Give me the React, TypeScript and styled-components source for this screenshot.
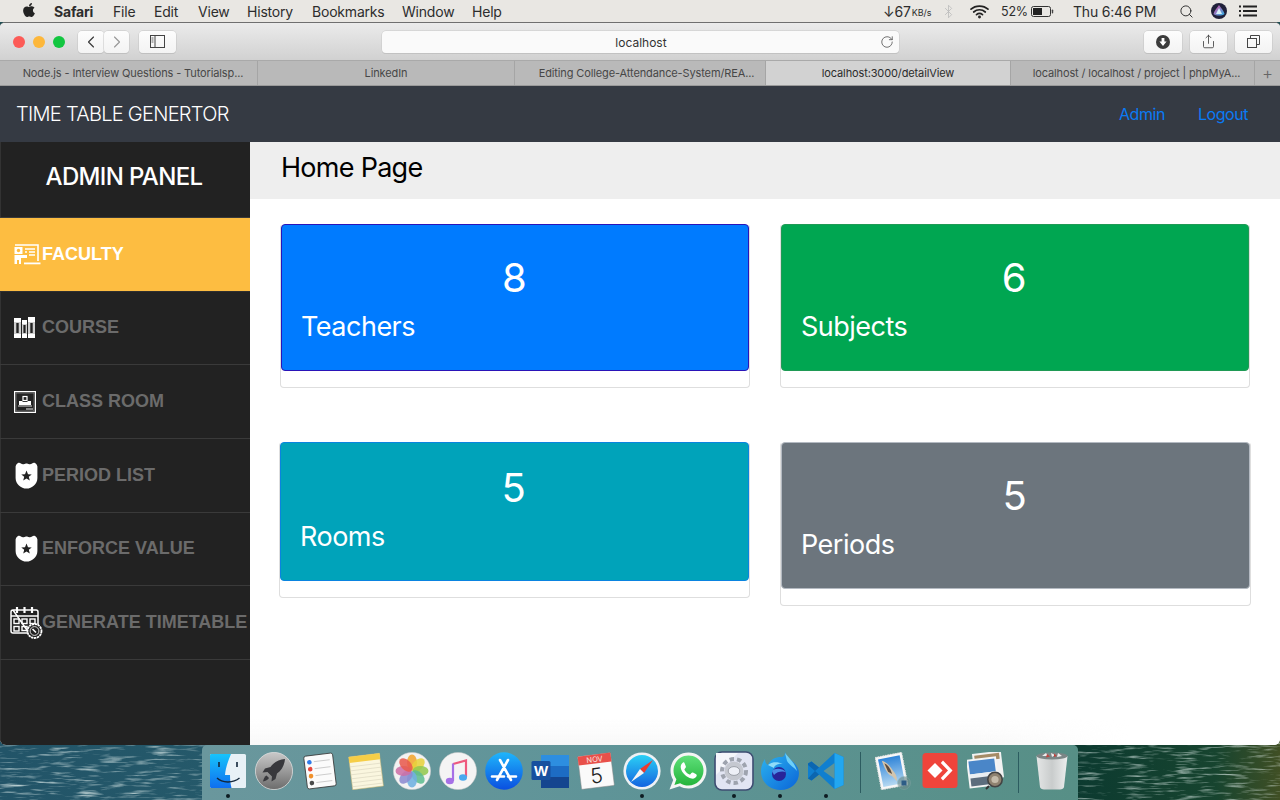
import React from "react";
import styled, { createGlobalStyle } from "styled-components";
import { FaApple } from "react-icons/fa";
import { ChevronLeft, ChevronRight, RotateCw, Search, Share, Bluetooth } from "lucide-react";

const Global = createGlobalStyle`
  html, body { margin: 0; padding: 0; background: #123; }
  * { box-sizing: border-box; }
`;

const Screen = styled.div`
  position: relative;
  width: 1280px;
  height: 800px;
  overflow: hidden;
  display: flex;
  flex-direction: column;
  font-family: Inter, "Liberation Sans", sans-serif;
  background: #1f4f55;
`;

const Wallpaper = styled.svg`
  position: absolute;
  left: 0;
  bottom: 0;
`;

const MenuBar = styled.header`
  height: 22px;
  flex: none;
  display: flex;
  justify-content: space-between;
  align-items: center;
  padding: 0 23px 0 21px;
  background: #e9e7e3;
  font-size: 14px;
  color: #2d2d2d;
  letter-spacing: -0.2px;
  position: relative;
`;

const MenuLeft = styled.nav`
  display: flex;
  align-items: center;
`;

const MenuItem = styled.span<{ $w: number; $bold?: boolean }>`
  width: ${(p) => p.$w}px;
  font-weight: ${(p) => (p.$bold ? 700 : 400)};
  white-space: nowrap;
`;

const AppleMark = styled(FaApple)`
  display: block;
  margin-top: -2px;
  color: #222;
`;

const MenuRight = styled.div`
  display: flex;
  align-items: center;
`;

const Status = styled.span<{ $w: number; $fs?: number }>`
  width: ${(p) => p.$w}px;
  display: flex;
  align-items: center;
  white-space: nowrap;
  font-size: ${(p) => p.$fs ?? 14}px;
`;

const Small = styled.small`
  font-size: 9px;
  letter-spacing: 0;
  margin-left: 1px;
  margin-top: 2px;
`;

const Window = styled.main`
  position: relative;
  height: 723px;
  flex: none;
  display: flex;
  flex-direction: column;
  overflow: hidden;
  border-radius: 5px 5px 6px 6px;
  background: #fff;
  border-top: 1px solid #6f6f6f;
`;

const Toolbar = styled.div`
  height: 37px;
  flex: none;
  display: grid;
  grid-template-columns: 382px 517px 1fr;
  align-items: center;
  background: linear-gradient(#ebebeb, #d1d1d1);
`;

const ToolLeft = styled.div`
  display: flex;
  align-items: center;
  padding-left: 13px;
`;

const Light = styled.i<{ $c: string }>`
  width: 12px;
  height: 12px;
  border-radius: 50%;
  margin-right: 8px;
  background: ${(p) => p.$c};
  display: block;
`;

const ToolButton = styled.button<{ $w: number; $l?: number; $r?: number }>`
  width: ${(p) => p.$w}px;
  height: 22px;
  margin-left: ${(p) => p.$l ?? 0}px;
  margin-right: ${(p) => p.$r ?? 0}px;
  padding: 0;
  display: flex;
  align-items: center;
  justify-content: center;
  background: linear-gradient(#fdfdfd, #f3f3f3);
  border: none;
  border-radius: 4px;
  box-shadow: 0 0 0 0.5px #c4c4c4, 0 1px 0 #bdbdbd;
  color: #3a3a3a;
`;

const UrlBar = styled.div`
  position: relative;
  height: 22px;
  display: flex;
  align-items: center;
  justify-content: center;
  padding: 1px 0 0 1px;
  background: #fafafa;
  border-radius: 4px;
  box-shadow: 0 0 0 0.5px #c8c8c8, 0 1px 0 #bdbdbd;
  font-size: 12px;
  color: #333;
`;

const Reload = styled.span`
  position: absolute;
  right: 5px;
  top: 4px;
  color: #555;
  display: flex;
`;

const ToolRight = styled.div`
  display: flex;
  align-items: center;
  padding-left: 245px;
`;

const TabStrip = styled.div`
  height: 26px;
  flex: none;
  display: grid;
  grid-template-columns: 258px 257px 251px 245px 244px 1fr;
  background: #b9b9b9;
  border-top: 1px solid #a9a9a9;
  border-bottom: 1px solid #9a9a9a;
`;

const Tab = styled.div<{ $active?: boolean; $pl: number }>`
  display: flex;
  align-items: center;
  justify-content: center;
  padding-left: ${(p) => p.$pl}px;
  font-size: 11px;
  white-space: nowrap;
  letter-spacing: -0.12px;
  color: ${(p) => (p.$active ? "#2b2b2b" : "#474747")};
  background: ${(p) => (p.$active ? "#d2d2d2" : "#b9b9b9")};
  border-right: 1px solid #a5a5a5;
`;

const NewTab = styled.div`
  display: flex;
  align-items: center;
  justify-content: center;
  color: #666;
  font-size: 17px;
  font-weight: 300;
`;

const NavBar = styled.div`
  height: 56px;
  flex: none;
  display: flex;
  align-items: center;
  justify-content: space-between;
  padding: 0 32px 0 16px;
  background: #353a43;
`;

const Brand = styled.div`
  font-size: 20px;
  font-weight: 300;
  color: #fff;
  letter-spacing: -0.72px;
`;

const NavLinks = styled.div`
  display: flex;
  gap: 33px;
  font-size: 16px;
  font-weight: 400;
  letter-spacing: -0.45px;
  color: #0a7bf5;
`;

const Body = styled.div`
  flex: 1;
  min-height: 0;
  display: flex;
`;

const Sidebar = styled.aside`
  width: 250px;
  flex: none;
  background: #222;
  box-shadow: inset 1px 0 0 #333;
`;

const PanelTitle = styled.div`
  height: 76px;
  display: flex;
  align-items: center;
  justify-content: center;
  color: #fff;
  font-size: 24px;
  font-weight: 500;
  letter-spacing: -0.65px;
  padding: 0 2px 6px 0;
  border-bottom: 1px solid #3a3a3a;
`;

const NavItem = styled.div<{ $active?: boolean }>`
  height: 73.66px;
  display: grid;
  grid-template-columns: 42px 1fr;
  align-items: center;
  background: ${(p) => (p.$active ? "#fdbd41" : "transparent")};
  color: ${(p) => (p.$active ? "#fff" : "#6b6b6b")};
  border-bottom: 1px solid ${(p) => (p.$active ? "#2f2f2f" : "#3a3a3a")};
  font-family: "Liberation Sans", Arial, sans-serif;
  font-weight: 700;
  font-size: 18px;
  white-space: nowrap;
`;

const NavIcon = styled.svg<{ $l: number }>`
  display: block;
  margin-left: ${(p) => p.$l}px;
`;

const Content = styled.section`
  position: relative;
  flex: 1;
  min-width: 0;
  display: flex;
  flex-direction: column;
  background: #fff;

  &::after {
    content: "";
    position: absolute;
    left: 0;
    right: 150px;
    bottom: 0;
    height: 26px;
    background: linear-gradient(transparent, #f8f8f8);
    mask-image: linear-gradient(90deg, #000 82%, transparent);
  }
`;

const TitleBar = styled.div`
  height: 57px;
  flex: none;
  display: flex;
  align-items: center;
  padding: 0 0 6px 31px;
  background: #eee;
`;

const Title = styled.h1`
  margin: 0;
  font-size: 27px;
  font-weight: 400;
  letter-spacing: -0.72px;
  color: #000;
`;

const Cards = styled.div`
  display: grid;
  grid-template-columns: 470px 470px;
  column-gap: 30px;
  row-gap: 54px;
  align-items: start;
  padding: 25px 0 0 30px;
`;

const Card = styled.article<{ $ml?: number; $mr?: number }>`
  margin: 0 ${(p) => p.$mr ?? 0}px 0 ${(p) => p.$ml ?? 0}px;
  border: 1px solid #dedede;
  border-top-color: transparent;
  border-radius: 4px;
  padding-bottom: 16px;
`;

const Panel = styled.div<{ $bg: string; $edge: string; $pad: number }>`
  background: ${(p) => p.$bg};
  border: 1px solid ${(p) => p.$edge};
  border-radius: 4px;
  padding: ${(p) => p.$pad}px 21px 26px 19px;
  margin-top: -1px;
  color: #fff;
  display: flex;
  flex-direction: column;
`;

const Count = styled.div`
  font-size: 40px;
  line-height: 48px;
  text-align: center;
  letter-spacing: -0.5px;
`;

const Label = styled.div`
  font-size: 27px;
  line-height: 34px;
  margin-top: 8px;
  letter-spacing: -0.5px;
`;

const DockRow = styled.div`
  position: relative;
  flex: 1;
  display: flex;
  justify-content: center;
`;

const Dock = styled.div`
  width: 876px;
  height: 55px;
  padding: 7px 7px 0;
  display: flex;
  gap: 8px;
  border-radius: 5px 5px 0 0;
  background: linear-gradient(90deg, #6a979d, #5f9498 45%, #578f86 100%);
`;

const Slot = styled.div`
  width: 38px;
  flex: none;
  display: flex;
  flex-direction: column;
  align-items: center;
`;

const Dot = styled.i<{ $on?: boolean }>`
  width: 4px;
  height: 4px;
  margin-top: 4px;
  border-radius: 50%;
  background: ${(p) => (p.$on ? "#0d1c22" : "transparent")};
`;

const Divider = styled.div<{ $l: number; $r: number }>`
  width: 1px;
  height: 41px;
  flex: none;
  margin-left: ${(p) => p.$l}px;
  margin-right: ${(p) => p.$r}px;
  background: #2c5c60;
`;

const DockIcon = styled.svg`
  display: block;
  flex: none;
  width: 38px;
  height: 38px;
`;

const PrefsFrame = styled(DockIcon)`
  width: 40px;
  height: 40px;
  margin: -1px -1px;
`;

/* ---------- sidebar icons ---------- */
const BoardIcon = () => (
  <NavIcon $l={14} width="27" height="21" viewBox="0 0 27 21" fill="none">
    <path d="M1 1H24V17" stroke="#fff" strokeWidth="1.6" />
    <path d="M10 19.4H26.5" stroke="#fff" strokeWidth="1.8" />
    <rect x="0.5" y="3" width="8" height="7" fill="#fff" />
    <circle cx="4.5" cy="6.5" r="1.7" fill="#fdbd41" />
    <path d="M0.5 11H13V14H7V20H5V16H3V20H0.5Z" fill="#fff" />
    <path d="M11 5H21M15 8H21M11 8H13M15 11H21" stroke="#fff" strokeWidth="1.3" />
  </NavIcon>
);

const BooksIcon = () => (
  <NavIcon $l={14} width="21" height="22" viewBox="0 0 21 22" fill="none">
    <rect x="0" y="1" width="7" height="20" fill="#fff" />
    <rect x="8" y="3" width="5" height="18" fill="#fff" />
    <rect x="14" y="0" width="7" height="21" fill="#fff" />
    <rect x="0" y="5" width="7" height="12" fill="#cfcfcf" />
    <rect x="8" y="7" width="5" height="10" fill="#cfcfcf" />
    <rect x="14" y="5" width="7" height="12" fill="#cfcfcf" />
    <rect x="2.3" y="6" width="2.4" height="10" fill="#222" />
    <rect x="9.4" y="8" width="2.2" height="8" fill="#222" />
    <rect x="16.3" y="6" width="2.4" height="10" fill="#222" />
  </NavIcon>
);

const RoomIcon = () => (
  <NavIcon $l={14} width="22" height="22" viewBox="0 0 22 22" fill="none">
    <rect x="0.6" y="0.6" width="20.8" height="20.8" stroke="#fff" strokeWidth="1.2" />
    <rect x="2" y="2" width="18" height="18" stroke="#888" strokeWidth="0.7" />
    <rect x="9" y="5.5" width="4" height="4" stroke="#fff" strokeWidth="1.2" />
    <path d="M5 10H8L9 11H13L14 10H17V14H5Z" fill="#fff" />
    <rect x="4" y="14.5" width="14" height="1" fill="#ddd" />
    <path d="M12 18H19" stroke="#ccc" strokeWidth="1.2" />
  </NavIcon>
);

const BadgeIcon = () => (
  <NavIcon $l={15} width="23" height="27" viewBox="0 0 23 27">
    <path
      d="M3 1C5 0 6 2 8 2.2 10 2.4 10.5 1.6 11.5 1.6 12.5 1.6 13 2.4 15 2.2 17 2 18 0 20 1 21.5 2 22 3 22.4 4.5L22.4 16C22.4 22 17 26.6 11.5 26.6 6 26.6 0.6 22 0.6 16L0.6 4.5C1 3 1.5 2 3 1Z"
      fill="#fff"
    />
    <path
      d="M11.5 8.6L13 12.2 16.7 12.4 13.8 14.8 14.8 18.4 11.5 16.4 8.2 18.4 9.2 14.8 6.3 12.4 10 12.2Z"
      fill="#222"
    />
  </NavIcon>
);

const CalendarIcon = () => (
  <NavIcon $l={10} width="33" height="33" viewBox="0 0 33 33" fill="none">
    <path d="M3 4H26C27 4 28 5 28 6V20M19 27H3C2 27 1 26 1 25V6C1 5 2 4 3 4Z" stroke="#fff" strokeWidth="1.5" />
    <path d="M1 10H28" stroke="#fff" strokeWidth="1.5" />
    <path d="M7 1V7M14.5 1V7M22 1V7" stroke="#fff" strokeWidth="2.2" />
    <g stroke="#fff" strokeWidth="1.4">
      <rect x="4" y="13" width="5" height="4.5" />
      <rect x="12" y="13" width="5" height="4.5" />
      <rect x="20" y="13" width="5" height="4.5" />
      <rect x="4" y="20.5" width="5" height="4.5" />
      <rect x="12" y="20.5" width="5" height="4" />
    </g>
    <circle cx="24.5" cy="25" r="7" fill="#222" stroke="#fff" strokeWidth="1.8" strokeDasharray="2.4 0.6" />
    <circle cx="24.5" cy="25" r="4.4" stroke="#fff" strokeWidth="0.8" />
    <path d="M22.5 23L26 26.5" stroke="#fff" strokeWidth="1.6" />
  </NavIcon>
);

/* ---------- dock icons ---------- */
const Finder = () => (
  <DockIcon viewBox="0 0 38 38">
    <defs>
      <linearGradient id="fa" x1="0" y1="0" x2="0" y2="1">
        <stop offset="0" stopColor="#17c4fb" />
        <stop offset="1" stopColor="#0f6ff0" />
      </linearGradient>
    </defs>
    <rect x="1" y="2" width="36" height="34" rx="1.5" fill="#e8f1f6" />
    <path d="M2.5 2H22C18.5 10 16.5 17 16 23H21C21 28 21.5 32 22.5 36H2.5C1.6 36 1 35.4 1 34.5V3.5C1 2.6 1.6 2 2.5 2Z" fill="url(#fa)" />
    <path d="M10 10V15M28 10V15" stroke="#12263a" strokeWidth="1.6" />
    <path d="M8 26C13 31 24 31.5 30.5 26" stroke="#12263a" strokeWidth="1.4" fill="none" />
  </DockIcon>
);

const Launchpad = () => (
  <DockIcon viewBox="0 0 38 38">
    <defs>
      <linearGradient id="lp" x1="0" y1="0" x2="0" y2="1">
        <stop offset="0" stopColor="#c9c9c9" />
        <stop offset="1" stopColor="#6c6c6c" />
      </linearGradient>
    </defs>
    <circle cx="19" cy="19" r="18.6" fill="url(#lp)" stroke="#ddd" strokeWidth="0.8" />
    <path d="M30 7C24 7.5 19 10 15.5 15L10 16.5 7.5 20.5 12.5 20 17 24.5 16.5 29.5 20.5 27 22 21.5C27 18 29.5 13 30 7Z" fill="#38383c" />
    <path d="M11.5 23.5C9.5 24.5 8.5 27 8 29.5 10.5 29 13 28 14 26Z" fill="#38383c" />
  </DockIcon>
);

const Reminders = () => (
  <DockIcon viewBox="0 0 38 38">
    <g transform="rotate(-7 19 19)">
      <rect x="4.5" y="2.5" width="29" height="33" rx="2" fill="#fbfbfb" stroke="#333" strokeWidth="0.8" />
      <circle cx="9.5" cy="9" r="2.3" fill="#2f7bea" />
      <circle cx="9.5" cy="16" r="2.3" fill="#e6483d" />
      <circle cx="9.5" cy="23" r="2.3" fill="#f0912b" />
      <circle cx="9.5" cy="30" r="2.3" fill="#4a4a4a" />
      <path d="M14 9H30M14 16H30M14 23H30M14 30H30" stroke="#c4c4c4" strokeWidth="0.8" />
    </g>
  </DockIcon>
);

const Notes = () => (
  <DockIcon viewBox="0 0 38 38">
    <g transform="rotate(-7 19 19)">
      <rect x="3.5" y="3" width="31" height="33" fill="#faf6df" stroke="#c7b56e" strokeWidth="0.5" />
      <rect x="3.5" y="3" width="31" height="6" fill="#f6ce47" />
      <path d="M3.5 13H34.5M3.5 17H34.5M3.5 21H34.5M3.5 25H34.5M3.5 29H34.5M3.5 33H34.5" stroke="#d9d4bd" strokeWidth="0.6" />
    </g>
  </DockIcon>
);

const Photos = () => {
  const c = ["#f3a52f", "#e7d13c", "#93c84e", "#5fbc8f", "#6fb1e0", "#8c8bd0", "#cc6fa6", "#e85b4e"];
  return (
    <DockIcon viewBox="0 0 38 38">
      <circle cx="19" cy="19" r="18.6" fill="#f2f2f2" stroke="#ccc" strokeWidth="0.5" />
      {c.map((f, i) => (
        <ellipse key={f} cx="19" cy="10.5" rx="5" ry="8" fill={f} opacity="0.88" transform={`rotate(${i * 45} 19 19)`} />
      ))}
    </DockIcon>
  );
};

const Music = () => (
  <DockIcon viewBox="0 0 38 38">
    <circle cx="19" cy="19" r="18.6" fill="#f4f4f4" stroke="#c8c8c8" strokeWidth="0.5" />
    <path d="M14 12L27 8.5V25" stroke="#ee5a7e" strokeWidth="2.2" fill="none" />
    <path d="M14 11.5V29" stroke="#a670e6" strokeWidth="2.2" />
    <ellipse cx="10.8" cy="29" rx="4" ry="3.3" fill="#a670e6" />
    <ellipse cx="24" cy="25.5" rx="4" ry="3.3" fill="#4aa8ee" />
  </DockIcon>
);

const AppStore = () => (
  <DockIcon viewBox="0 0 38 38">
    <defs>
      <linearGradient id="as" x1="0" y1="0" x2="0" y2="1">
        <stop offset="0" stopColor="#1fb6fb" />
        <stop offset="1" stopColor="#0a4fe0" />
      </linearGradient>
    </defs>
    <circle cx="19" cy="19" r="18.8" fill="url(#as)" />
    <path d="M15 8L26 28M23 8L12 28M7 24.5H19M23 24.5H31" stroke="#fff" strokeWidth="2.6" strokeLinecap="round" />
  </DockIcon>
);

const Word = () => (
  <DockIcon viewBox="0 0 38 38">
    <rect x="10" y="3" width="28" height="33" rx="1.5" fill="#1b5fb4" />
    <rect x="10" y="3" width="28" height="11" fill="#2d8ee0" />
    <rect x="10" y="14" width="28" height="11" fill="#1d6cc4" />
    <rect x="10" y="25" width="28" height="11" fill="#14458f" />
    <rect x="0.5" y="9" width="19" height="19" rx="1.5" fill="#17509f" />
    <text x="10" y="24" textAnchor="middle" fontFamily="Liberation Sans" fontWeight="700" fontSize="15" fill="#fff">W</text>
  </DockIcon>
);

const Calendar = () => (
  <DockIcon viewBox="0 0 38 38">
    <g transform="rotate(-7 19 19)">
      <rect x="2.5" y="2.5" width="33" height="33" rx="1" fill="#fafafa" stroke="#888" strokeWidth="0.5" />
      <rect x="2.5" y="2.5" width="33" height="9" fill="#e8504a" />
      <text x="19" y="10" textAnchor="middle" fontFamily="Inter" fontSize="7.5" fill="#fbe3e0">NOV</text>
      <text x="19" y="31" textAnchor="middle" fontFamily="Inter" fontWeight="300" fontSize="21" fill="#222">5</text>
    </g>
  </DockIcon>
);

const Safari = () => (
  <DockIcon viewBox="0 0 38 38">
    <defs>
      <linearGradient id="sf" x1="0" y1="0" x2="0" y2="1">
        <stop offset="0" stopColor="#2bd0f5" />
        <stop offset="1" stopColor="#1464e0" />
      </linearGradient>
    </defs>
    <circle cx="19" cy="19" r="18.6" fill="#eef1f4" />
    <circle cx="19" cy="19" r="16" fill="url(#sf)" />
    <path d="M30 8L21 21 17 17Z" fill="#ee3b30" />
    <path d="M8 30L17 17 21 21Z" fill="#f5f5f5" />
  </DockIcon>
);

const WhatsApp = () => (
  <DockIcon viewBox="0 0 38 38">
    <defs>
      <linearGradient id="wa" x1="0" y1="0" x2="0" y2="1">
        <stop offset="0" stopColor="#5fe07a" />
        <stop offset="1" stopColor="#25b43c" />
      </linearGradient>
    </defs>
    <path d="M19.5 0.5C9.5 0.5 1.5 8.5 1.5 18.5 1.5 22 2.5 25.2 4.2 28L0.5 37.5 10.6 34.3C13.2 35.7 16.3 36.5 19.5 36.5 29.5 36.5 37.5 28.5 37.5 18.5S29.5 0.5 19.5 0.5Z" fill="#f5f5f5" />
    <path d="M19.5 3.5C11.2 3.5 4.5 10.2 4.5 18.5 4.5 21.8 5.6 24.8 7.4 27.3L5.4 33 11.2 31.2C13.6 32.7 16.4 33.5 19.5 33.5 27.8 33.5 34.5 26.8 34.5 18.5S27.8 3.5 19.5 3.5Z" fill="url(#wa)" />
    <path d="M14 10.5C12.5 11.5 11.3 13.4 11.8 16 12.6 20.5 17.5 25.5 22.5 26.6 25 27.2 27 25.5 27.6 24 28 23 27.6 22.5 26.8 22L24 20.6C23.3 20.3 22.8 20.5 22.4 21L21.4 22.2C21 22.6 20.6 22.6 20 22.3 18 21.3 16.6 19.8 15.6 18 15.3 17.5 15.4 17.1 15.8 16.7L16.6 15.7C17 15.2 17 14.8 16.8 14.3L15.6 11.2C15.3 10.4 14.7 10.1 14 10.5Z" fill="#fff" />
  </DockIcon>
);

const SysPrefs = () => (
  <PrefsFrame viewBox="0 0 40 40">
    <rect x="1" y="1" width="38" height="38" rx="7" fill="#e2e5f3" stroke="#3e4d72" strokeWidth="1.6" />
    <path d="M2 2H24L2 24Z" fill="#f5f6fb" />
    <circle cx="20" cy="20" r="12" fill="none" stroke="#9ea3ae" strokeWidth="4" strokeDasharray="4.4 3" />
    <circle cx="20" cy="20" r="9.5" fill="#c5c8d0" />
    <ellipse cx="20" cy="20" rx="5.8" ry="4.4" fill="#eef0f7" stroke="#8d9099" strokeWidth="0.8" />
  </PrefsFrame>
);

const Firefox = () => (
  <DockIcon viewBox="0 0 38 38">
    <defs>
      <linearGradient id="ff" x1="0" y1="0" x2="1" y2="1">
        <stop offset="0" stopColor="#2db6f0" />
        <stop offset="1" stopColor="#0a64d8" />
      </linearGradient>
    </defs>
    <path d="M24 0C26 5 27 6 31 9 36 13 38 17 38 21 38 31 30 38 19.5 38 8.5 38 0 30 0 19.5 0 14 2 10 4 7 4 10 5 12 7 13 9 8 14 5 20 5 23 5 24 3 24 0Z" fill="url(#ff)" />
    <path d="M7 13C10 10 16 9 22 12 17 11 13 14 13 16Z" fill="#8fdcf9" />
    <circle cx="18" cy="22" r="7" fill="#28249a" />
    <path d="M11 19C14 16 21 16 25 20 22 19 16 19 13 23Z" fill="#4b8ee8" />
    <path d="M24 1C28 6 34 11 36 19 33 15 28 13 26 9Z" fill="#6ed0f8" />
  </DockIcon>
);

const VSCode = () => (
  <DockIcon viewBox="0 0 38 38">
    <path d="M27.5 1L36.5 5V33L27.5 37 12 22.5 4.5 28.5 1 26.5V11.5L4.5 9.5 12 15.5Z" fill="#0f7fd0" />
    <path d="M27.5 1L36.5 5V33L27.5 37Z" fill="#22a7f0" />
    <path d="M27.5 11L16.5 19 27.5 27Z" fill="#5f9498" />
    <path d="M1 11.5L4.5 9.5 12 15.5 8 19 1 13Z M1 26.5L8 19 12 22.5 4.5 28.5Z" fill="#0b66b0" />
  </DockIcon>
);

const Mail = () => (
  <DockIcon viewBox="0 0 38 38">
    <defs>
      <linearGradient id="sky" x1="0" y1="0" x2="0" y2="1">
        <stop offset="0" stopColor="#2f84d8" />
        <stop offset="1" stopColor="#b4d8f2" />
      </linearGradient>
    </defs>
    <g transform="rotate(-11 17 19)">
      <rect x="3" y="2.5" width="27" height="33" fill="#f7f7f7" stroke="#e0e0e0" strokeDasharray="1.5 1" />
      <rect x="5.5" y="5" width="22" height="28" fill="url(#sky)" />
      <path d="M9 7C13 9 16 13 18 19 20 22 21 26 20 30L16 24C12 22 10 15 9 7Z" fill="#d3c5ad" />
      <path d="M11 10C14 12 16 16 16.5 22L13 19Z" fill="#5d4b3c" />
    </g>
    <circle cx="29" cy="31" r="6.5" fill="#6c8c8c" opacity="0.65" stroke="#8aa" strokeWidth="0.6" />
    <rect x="26.5" y="28.5" width="5" height="5" fill="#2d5c86" />
  </DockIcon>
);

const AnyDesk = () => (
  <DockIcon viewBox="0 0 38 38">
    <rect x="1.5" y="1" width="35" height="35" rx="3.5" fill="#ef443b" />
    <path d="M14 11L21.5 18.5 14 26 6.5 18.5Z" fill="#fff" />
    <path d="M22 8.5L31.5 18.5 22 28.5 19.8 26 27 18.5 19.8 11Z" fill="#fff" />
  </DockIcon>
);

const Preview = () => (
  <DockIcon viewBox="0 0 38 38">
    <g transform="rotate(-7 19 18)">
      <rect x="7" y="0.5" width="29" height="27" fill="#f2f2f2" />
      <rect x="9" y="2.5" width="25" height="6" fill="#a58b66" />
    </g>
    <g transform="rotate(-7 15 22)">
      <rect x="1" y="6" width="30" height="29" fill="#f5f5f5" />
      <rect x="3" y="8" width="26" height="13" fill="#4a86c8" />
      <rect x="3" y="21" width="26" height="4" fill="#e9eef2" />
      <rect x="3" y="25" width="26" height="8" fill="#5c6d7d" />
    </g>
    <circle cx="28" cy="27.5" r="7.2" fill="#8f8270" stroke="#444" strokeWidth="1.6" />
    <circle cx="28" cy="27.5" r="3.6" fill="#c5bbaa" />
    <path d="M22 34L19 37" stroke="#333" strokeWidth="2" />
  </DockIcon>
);

const Trash = () => (
  <DockIcon viewBox="0 0 38 38">
    <defs>
      <linearGradient id="tr" x1="0" y1="0" x2="1" y2="0">
        <stop offset="0" stopColor="#e4e6e6" />
        <stop offset="0.5" stopColor="#c9cccc" />
        <stop offset="1" stopColor="#eceeee" />
      </linearGradient>
    </defs>
    <path d="M3.5 4H34.5L31 35C30.8 36.5 29 37.5 27 37.5H11C9 37.5 7.2 36.5 7 35Z" fill="url(#tr)" />
    <ellipse cx="19" cy="4" rx="15.5" ry="3.5" fill="#7b8686" />
    <path d="M9 4L13 1 15 4ZM18 1L22 3 19 5ZM25 1L29 4 24 5Z" fill="#eee" />
    <path d="M14 2L17 4.5 13 5.5ZM21 1.5L24 4 21 5Z" fill="#c0453f" />
  </DockIcon>
);

const Wifi = () => (
  <svg width="21" height="15" viewBox="0 0 20 15" fill="none" stroke="#222" strokeWidth="1.7" strokeLinecap="round">
    <path d="M1.5 5.2C6 1 14 1 18.5 5.2" />
    <path d="M4.2 8C7.5 5 12.5 5 15.8 8" />
    <path d="M7 10.6C8.7 9.2 11.3 9.2 13 10.6" />
    <circle cx="10" cy="13" r="0.6" fill="#222" />
  </svg>
);

const Battery = () => (
  <svg width="23" height="11" viewBox="0 0 23 11" fill="none">
    <rect x="0.5" y="0.5" width="19" height="10" rx="2" stroke="#333" />
    <rect x="2" y="2" width="9" height="7" fill="#222" />
    <rect x="20.8" y="3.5" width="1.4" height="4" rx="0.7" fill="#444" />
  </svg>
);

const Siri = () => (
  <svg width="16" height="16" viewBox="0 0 16 16">
    <defs>
      <linearGradient id="si" x1="0" y1="0" x2="1" y2="1">
        <stop offset="0" stopColor="#e0459c" />
        <stop offset="1" stopColor="#2fb6ea" />
      </linearGradient>
    </defs>
    <circle cx="8" cy="8" r="8" fill="#20203a" />
    <path d="M8 2C10 5 13 8 13.5 11 11 13 5 13 2.5 11 3 8 6 5 8 2Z" fill="url(#si)" />
    <path d="M8 5L11 11H5Z" fill="#d5eef8" />
  </svg>
);

const ListIcon = () => (
  <svg width="18" height="12" viewBox="0 0 18 12" fill="#222">
    <rect x="0" y="0.5" width="2" height="2" />
    <rect x="4" y="0.5" width="14" height="2" />
    <rect x="0" y="5" width="2" height="2" />
    <rect x="4" y="5" width="14" height="2" />
    <rect x="0" y="9.5" width="2" height="2" />
    <rect x="4" y="9.5" width="14" height="2" />
  </svg>
);

const SidebarGlyph = () => (
  <svg width="15" height="13" viewBox="0 0 15 13" fill="none" stroke="#444">
    <rect x="0.5" y="0.5" width="14" height="12" />
    <path d="M5 0.5V12.5" />
    <path d="M1.5 3H3.5M1.5 5H3.5M1.5 7H3.5" strokeWidth="0.8" />
  </svg>
);

const DownloadGlyph = () => (
  <svg width="14" height="14" viewBox="0 0 14 14">
    <circle cx="7" cy="7" r="7" fill="#3c3c3c" />
    <path d="M5.6 3H8.4V6.6H10.6L7 11 3.4 6.6H5.6Z" fill="#fff" />
  </svg>
);

const TabsGlyph = () => (
  <svg width="13" height="13" viewBox="0 0 13 13" fill="none" stroke="#444">
    <rect x="0.5" y="3.5" width="9" height="9" />
    <path d="M3.5 3.5V0.5H12.5V9.5H9.5" />
  </svg>
);

const dockItems: { key: string; icon: React.ReactNode; on?: boolean }[] = [
  { key: "finder", icon: <Finder />, on: true },
  { key: "launchpad", icon: <Launchpad /> },
  { key: "reminders", icon: <Reminders /> },
  { key: "notes", icon: <Notes /> },
  { key: "photos", icon: <Photos /> },
  { key: "music", icon: <Music /> },
  { key: "appstore", icon: <AppStore /> },
  { key: "word", icon: <Word /> },
  { key: "calendar", icon: <Calendar /> },
  { key: "safari", icon: <Safari />, on: true },
  { key: "whatsapp", icon: <WhatsApp /> },
  { key: "prefs", icon: <SysPrefs />, on: true },
  { key: "firefox", icon: <Firefox />, on: true },
  { key: "vscode", icon: <VSCode />, on: true },
];

const navItems = [
  { label: "FACULTY", icon: <BoardIcon />, active: true },
  { label: "COURSE", icon: <BooksIcon /> },
  { label: "CLASS ROOM", icon: <RoomIcon /> },
  { label: "PERIOD LIST", icon: <BadgeIcon /> },
  { label: "ENFORCE VALUE", icon: <BadgeIcon /> },
  { label: "GENERATE TIMETABLE", icon: <CalendarIcon /> },
];

const tabs = [
  { t: "Node.js - Interview Questions - Tutorialsp...", pl: 9 },
  { t: "LinkedIn", pl: 0 },
  { t: "Editing College-Attendance-System/REA...", pl: 13 },
  { t: "localhost:3000/detailView", pl: 0 },
  { t: "localhost / localhost / project | phpMyA...", pl: 8 },
];

export default function App() {
  return (
    <Screen>
      <Global />
      <Wallpaper width="1280" height="60" viewBox="0 0 1280 60">
        <defs>
          <linearGradient id="wall" x1="0" y1="0" x2="1" y2="0">
            <stop offset="0" stopColor="#225468" />
            <stop offset="0.17" stopColor="#25596a" />
            <stop offset="0.84" stopColor="#0c3a30" />
            <stop offset="0.95" stopColor="#17442f" />
            <stop offset="1" stopColor="#404f24" />
          </linearGradient>
          <filter id="ripple" x="0" y="0" width="100%" height="100%">
            <feTurbulence type="fractalNoise" baseFrequency="0.04 0.36" numOctaves="3" seed="4" />
            <feColorMatrix values="0 0 0 0 0.8  0 0 0 0 0.9  0 0 0 0 0.88  1.3 1.3 0 0 -1.32" />
          </filter>
        </defs>
        <rect width="1280" height="60" fill="url(#wall)" />
        <rect width="1280" height="60" filter="url(#ripple)" />
      </Wallpaper>

      <MenuBar>
        <MenuLeft>
          <MenuItem $w={33}>
            <AppleMark size={16} />
          </MenuItem>
          <MenuItem $w={59} $bold>Safari</MenuItem>
          <MenuItem $w={41}>File</MenuItem>
          <MenuItem $w={44}>Edit</MenuItem>
          <MenuItem $w={49}>View</MenuItem>
          <MenuItem $w={65}>History</MenuItem>
          <MenuItem $w={90}>Bookmarks</MenuItem>
          <MenuItem $w={70}>Window</MenuItem>
          <MenuItem $w={32}>Help</MenuItem>
        </MenuLeft>
        <MenuRight>
          <Status $w={58}>↓67<Small>KB/s</Small></Status>
          <Status $w={28}><Bluetooth size={15} color="#bbb" strokeWidth={1.3} /></Status>
          <Status $w={32}><Wifi /></Status>
          <Status $w={30} $fs={12.5}>52%</Status>
          <Status $w={42}><Battery /></Status>
          <Status $w={106}>Thu 6:46 PM</Status>
          <Status $w={32}><Search size={15} color="#333" strokeWidth={1.6} /></Status>
          <Status $w={28}><Siri /></Status>
          <Status $w={18}><ListIcon /></Status>
        </MenuRight>
      </MenuBar>

      <Window>
        <Toolbar>
          <ToolLeft>
            <Light $c="#fc5b57" />
            <Light $c="#fdb73b" />
            <Light $c="#12c640" />
            <ToolButton $w={26} $l={5}><ChevronLeft size={20} strokeWidth={1.4} /></ToolButton>
            <ToolButton $w={25}><ChevronRight size={20} strokeWidth={1.4} color="#999" /></ToolButton>
            <ToolButton $w={37} $l={10}><SidebarGlyph /></ToolButton>
          </ToolLeft>
          <UrlBar>
            localhost
            <Reload><RotateCw size={14} strokeWidth={1.4} /></Reload>
          </UrlBar>
          <ToolRight>
            <ToolButton $w={38}><DownloadGlyph /></ToolButton>
            <ToolButton $w={37} $l={8}><Share size={15} strokeWidth={1.3} /></ToolButton>
            <ToolButton $w={37} $l={8}><TabsGlyph /></ToolButton>
          </ToolRight>
        </Toolbar>

        <TabStrip>
          {tabs.map((x, i) => (
            <Tab key={x.t} $active={i === 3} $pl={x.pl}>{x.t}</Tab>
          ))}
          <NewTab>+</NewTab>
        </TabStrip>

        <NavBar>
          <Brand>TIME TABLE GENERTOR</Brand>
          <NavLinks>
            <span>Admin</span>
            <span>Logout</span>
          </NavLinks>
        </NavBar>

        <Body>
          <Sidebar>
            <PanelTitle>ADMIN PANEL</PanelTitle>
            {navItems.map((n) => (
              <NavItem key={n.label} $active={n.active}>
                {n.icon}
                <span>{n.label}</span>
              </NavItem>
            ))}
          </Sidebar>
          <Content>
            <TitleBar><Title>Home Page</Title></TitleBar>
            <Cards>
              <Card>
                <Panel $bg="#007bff" $edge="#2a14b8" $pad={29}>
                  <Count>8</Count>
                  <Label>Teachers</Label>
                </Panel>
              </Card>
              <Card>
                <Panel $bg="#00a651" $edge="#1f9a55" $pad={29}>
                  <Count>6</Count>
                  <Label>Subjects</Label>
                </Panel>
              </Card>
              <Card $ml={-1}>
                <Panel $bg="#00a3ba" $edge="#0a84e0" $pad={21}>
                  <Count>5</Count>
                  <Label>Rooms</Label>
                </Panel>
              </Card>
              <Card $mr={-1}>
                <Panel $bg="#6c757d" $edge="#b4bac2" $pad={29}>
                  <Count>5</Count>
                  <Label>Periods</Label>
                </Panel>
              </Card>
            </Cards>
          </Content>
        </Body>
      </Window>

      <DockRow>
        <Dock>
          {dockItems.map((d) => (
            <Slot key={d.key}>
              {d.icon}
              <Dot $on={d.on} />
            </Slot>
          ))}
          <Divider $l={7} $r={6} />
          <Slot><Mail /></Slot>
          <Slot><AnyDesk /></Slot>
          <Slot><Preview /></Slot>
          <Divider $l={5} $r={6} />
          <Slot><Trash /></Slot>
        </Dock>
      </DockRow>
    </Screen>
  );
}
